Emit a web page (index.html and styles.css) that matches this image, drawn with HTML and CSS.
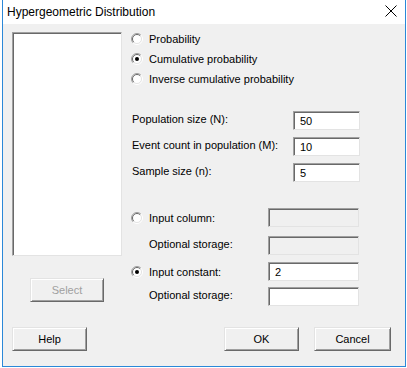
FILE: index.html
```html
<!DOCTYPE html>
<html lang="en">
<head>
  <meta charset="UTF-8">
  <title>Hypergeometric Distribution</title>
  <link rel="stylesheet" href="styles.css">
</head>
<body>
  <div class="window">
    <div class="titlebar">
      <span class="title">Hypergeometric Distribution</span>
      <svg class="close" width="12" height="12" viewBox="0 0 12 12">
        <path d="M0.5 0.5 L11.5 11.5 M11.5 0.5 L0.5 11.5" stroke="#000" stroke-width="1" fill="none"/>
      </svg>
    </div>

    <div class="content">
      <div class="left">
        <div class="listbox"></div>
        <button class="btn select" disabled>Select</button>
      </div>

      <div class="right">
        <div class="radios">
          <label class="radio">
            <svg width="12" height="12" viewBox="0 0 12 12"><circle cx="6" cy="6" r="5" fill="#fff"/><path d="M2.1 9.9 A5.5 5.5 0 0 1 9.9 2.1" stroke="#a0a0a0" fill="none"/><path d="M2.8 9.2 A4.5 4.5 0 0 1 9.2 2.8" stroke="#696969" fill="none"/><path d="M9.9 2.1 A5.5 5.5 0 0 1 2.1 9.9" stroke="#fff" fill="none"/><path d="M9.2 2.8 A4.5 4.5 0 0 1 2.8 9.2" stroke="#e3e3e3" fill="none"/></svg>
            Probability
          </label>
          <label class="radio">
            <svg width="12" height="12" viewBox="0 0 12 12"><circle cx="6" cy="6" r="5" fill="#fff"/><path d="M2.1 9.9 A5.5 5.5 0 0 1 9.9 2.1" stroke="#a0a0a0" fill="none"/><path d="M2.8 9.2 A4.5 4.5 0 0 1 9.2 2.8" stroke="#696969" fill="none"/><path d="M9.9 2.1 A5.5 5.5 0 0 1 2.1 9.9" stroke="#fff" fill="none"/><path d="M9.2 2.8 A4.5 4.5 0 0 1 2.8 9.2" stroke="#e3e3e3" fill="none"/><circle cx="6" cy="6" r="2" fill="#000"/></svg>
            Cumulative probability
          </label>
          <label class="radio">
            <svg width="12" height="12" viewBox="0 0 12 12"><circle cx="6" cy="6" r="5" fill="#fff"/><path d="M2.1 9.9 A5.5 5.5 0 0 1 9.9 2.1" stroke="#a0a0a0" fill="none"/><path d="M2.8 9.2 A4.5 4.5 0 0 1 9.2 2.8" stroke="#696969" fill="none"/><path d="M9.9 2.1 A5.5 5.5 0 0 1 2.1 9.9" stroke="#fff" fill="none"/><path d="M9.2 2.8 A4.5 4.5 0 0 1 2.8 9.2" stroke="#e3e3e3" fill="none"/></svg>
            Inverse cumulative probability
          </label>
        </div>

        <div class="params">
          <div class="param">
            <span class="plabel">Population size (N):</span>
            <div class="field">50</div>
          </div>
          <div class="param">
            <span class="plabel">Event count in population (M):</span>
            <div class="field">10</div>
          </div>
          <div class="param">
            <span class="plabel">Sample size (n):</span>
            <div class="field">5</div>
          </div>
        </div>

        <div class="inputs">
          <div class="irow">
            <label class="radio">
              <svg width="12" height="12" viewBox="0 0 12 12"><circle cx="6" cy="6" r="5" fill="#fff"/><path d="M2.1 9.9 A5.5 5.5 0 0 1 9.9 2.1" stroke="#a0a0a0" fill="none"/><path d="M2.8 9.2 A4.5 4.5 0 0 1 9.2 2.8" stroke="#696969" fill="none"/><path d="M9.9 2.1 A5.5 5.5 0 0 1 2.1 9.9" stroke="#fff" fill="none"/><path d="M9.2 2.8 A4.5 4.5 0 0 1 2.8 9.2" stroke="#e3e3e3" fill="none"/></svg>
              Input column:
            </label>
            <div class="field wide disabled"></div>
          </div>
          <div class="irow">
            <span class="ilabel">Optional storage:</span>
            <div class="field wide disabled"></div>
          </div>
          <div class="irow">
            <label class="radio">
              <svg width="12" height="12" viewBox="0 0 12 12"><circle cx="6" cy="6" r="5" fill="#fff"/><path d="M2.1 9.9 A5.5 5.5 0 0 1 9.9 2.1" stroke="#a0a0a0" fill="none"/><path d="M2.8 9.2 A4.5 4.5 0 0 1 9.2 2.8" stroke="#696969" fill="none"/><path d="M9.9 2.1 A5.5 5.5 0 0 1 2.1 9.9" stroke="#fff" fill="none"/><path d="M9.2 2.8 A4.5 4.5 0 0 1 2.8 9.2" stroke="#e3e3e3" fill="none"/><circle cx="6" cy="6" r="2" fill="#000"/></svg>
              Input constant:
            </label>
            <div class="field wide">2</div>
          </div>
          <div class="irow">
            <span class="ilabel">Optional storage:</span>
            <div class="field wide"></div>
          </div>
        </div>
      </div>
    </div>

    <div class="footer">
      <button class="btn">Help</button>
      <div class="actions">
        <button class="btn">OK</button>
        <button class="btn cancel">Cancel</button>
      </div>
    </div>
  </div>
</body>
</html>
```

FILE: styles.css
```css
body {
  margin: 0;
  padding: 0;
  background: #fff;
  font-family: "Liberation Sans", Arial, sans-serif;
  font-size: 11px;
  color: #000;
}
.window {
  margin-left: 2px;
  width: 402px;
  height: 366px;
  border: 1px solid #2b88d8;
  border-top: none;
  background: #f0f0f0;
  display: flex;
  flex-direction: column;
}
.titlebar {
  height: 24px;
  background: #fff;
  display: flex;
  align-items: center;
  justify-content: space-between;
  padding: 0 8px 0 4px;
}
.title {
  font-size: 12px;
  margin-top: -1px;
}
.close {
  margin-top: -2px;
}
.content {
  height: 303px;
  display: flex;
}
.left {
  padding-left: 9px;
  width: 110px;
}
.listbox {
  margin-top: 8px;
  height: 222px;
  background: #fff;
  border: 1px solid;
  border-color: #a0a0a0 #e3e3e3 #e3e3e3 #a0a0a0;
  box-shadow: inset 1px 1px #696969;
}
.btn {
  font-family: "Liberation Sans", Arial, sans-serif;
  font-size: 11px;
  color: #000;
  width: 75px;
  height: 24px;
  padding: 0;
  background: #f0f0f0;
  border: 1px solid;
  border-color: #e3e3e3 #696969 #696969 #e3e3e3;
  box-shadow: inset 1px 1px #fff, inset -1px -1px #a0a0a0;
}
.select {
  display: block;
  margin: 22px 0 0 18px;
  width: 74px;
  color: #a0a0a0;
}
.right {
  margin-left: 9px;
  width: 232px;
}
.radios {
  margin-top: 5px;
}
.radio {
  display: flex;
  align-items: center;
  gap: 6px;
  height: 20px;
}
.params {
  margin-top: 22px;
  display: flex;
  flex-direction: column;
  gap: 7px;
}
.param {
  display: flex;
  align-items: center;
  height: 19px;
}
.plabel {
  width: 161px;
  padding-left: 1px;
  margin-top: -3px;
}
.field {
  box-sizing: border-box;
  width: 67px;
  height: 19px;
  padding: 2px 0 0 6px;
  background: #fff;
  border: 1px solid;
  border-color: #a0a0a0 #e3e3e3 #e3e3e3 #a0a0a0;
  box-shadow: inset 1px 1px #696969;
  line-height: 14px;
}
.field.wide {
  width: 91px;
  height: 19px;
}
.field.disabled {
  background: #f0f0f0;
}
.inputs {
  margin-top: 26px;
  display: grid;
  grid-template-rows: 28px 26px 25px 20px;
}
.irow {
  display: grid;
  grid-template-columns: 137px 91px;
  align-items: start;
}
.irow .radio {
  height: 19px;
}
.ilabel {
  padding-left: 18px;
  line-height: 17px;
}
.footer {
  height: 24px;
  display: flex;
  justify-content: space-between;
  padding: 0 14px 0 9px;
}
.actions {
  display: flex;
  gap: 15px;
}
.cancel {
  width: 77px;
}
```
